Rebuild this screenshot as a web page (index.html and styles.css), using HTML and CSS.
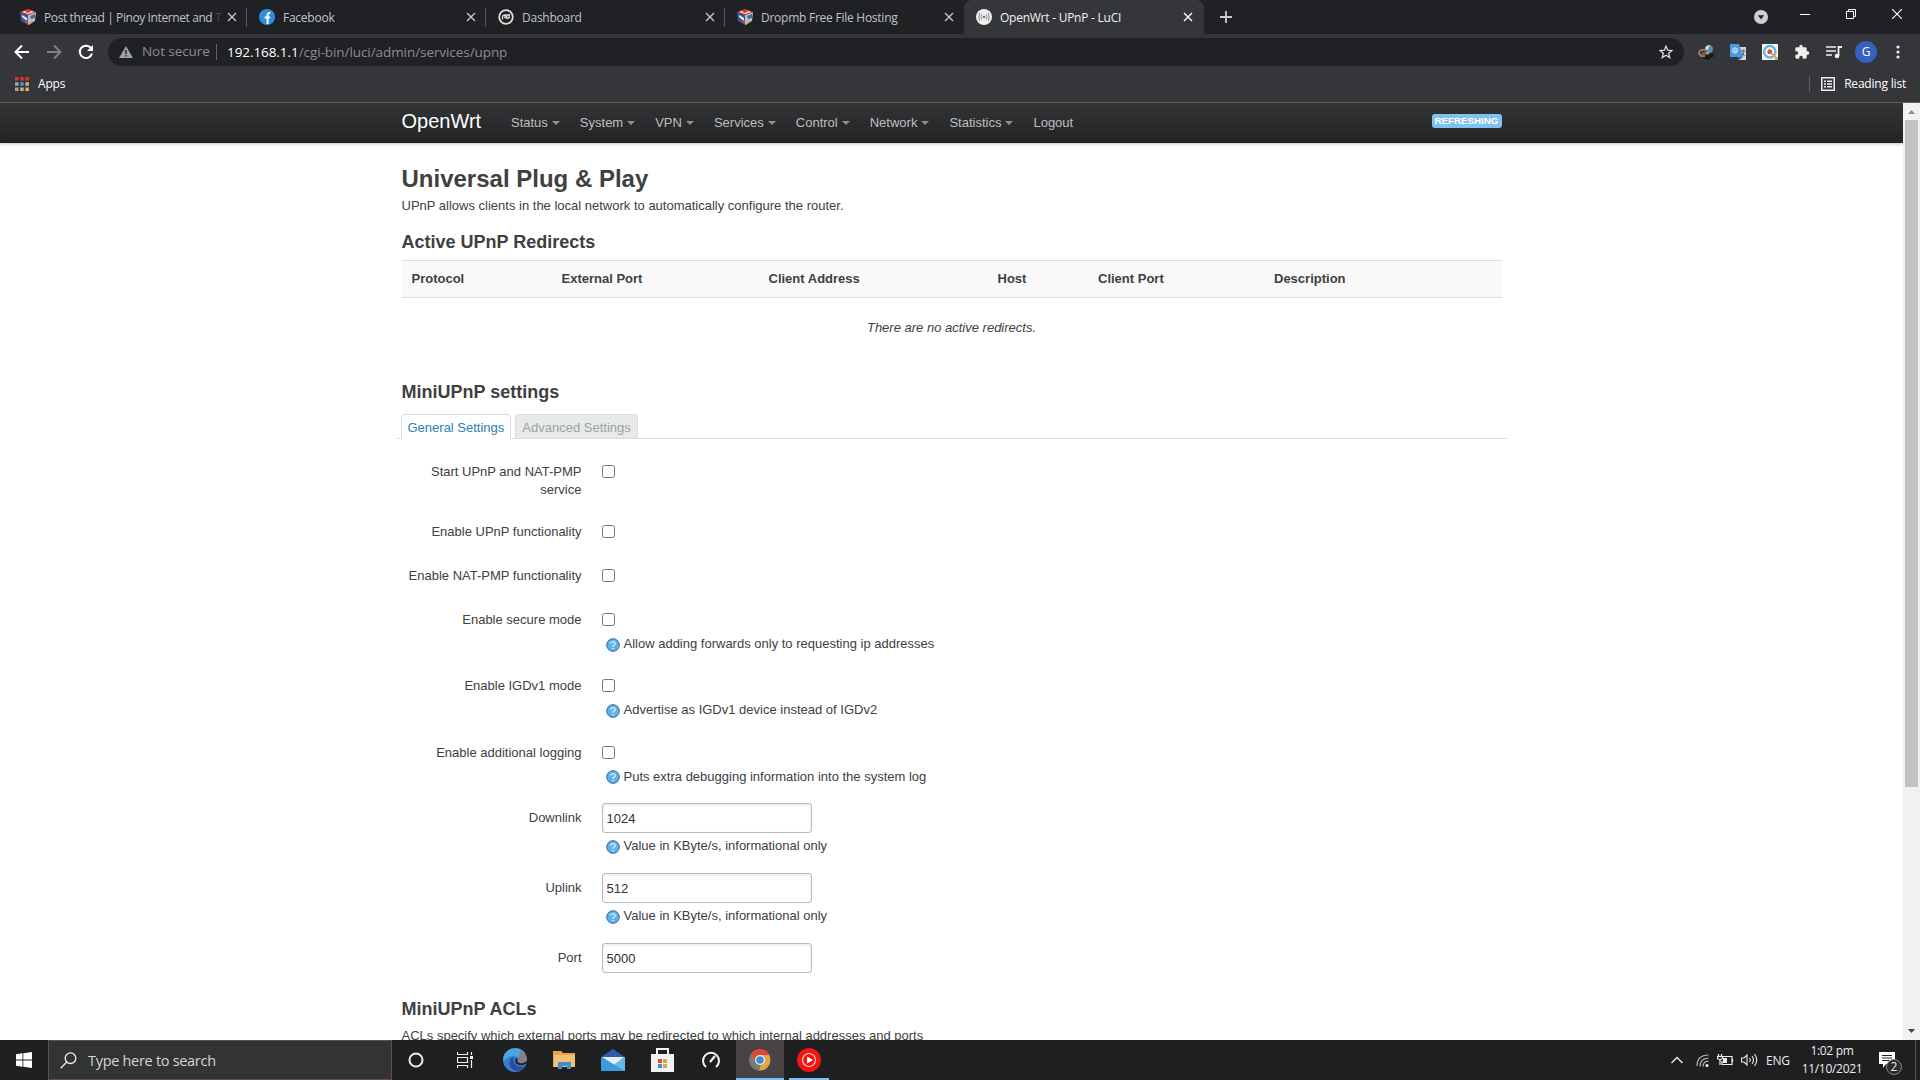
FILE: index.html
```html
<!DOCTYPE html>
<html lang="en">
<head>
    <meta charset="UTF-8">
    <meta name="viewport" content="width=device-width, initial-scale=1.0">
    <title>OpenWrt - UPnP - LuCI</title>
    <link rel="stylesheet" href="styles.css">
</head>
<body>
    <svg class="defs" width="0" height="0">
        <symbol id="i-close" viewBox="0 0 10 10"><path d="M1 1l8 8M9 1L1 9" stroke="currentColor" stroke-width="1.4" fill="none"/></symbol>
        <symbol id="i-cube" viewBox="0 0 16 16">
            <path d="M0 3l8 3v10l-7-4z" fill="#3b5595"/>
            <path d="M16 3L8 6v10l7-4z" fill="#b9c0c8"/>
            <path d="M0 3l8-3 8 3-8 3z" fill="#d8463a"/>
            <path d="M2 3l3-1 3 1 4-1 2 1-6 2z" fill="#e9e4e2"/>
            <path d="M5 3l3 1 3-2-3-1z" fill="#d8342d"/>
            <path d="M2 6l5 3v3L2 8z" fill="#e8edf2"/>
            <path d="M10 7l5-2v4l-4 1z" fill="#4968a8"/>
            <path d="M4 12l4 3v-4z" fill="#c0453d"/>
            <path d="M9 14l4-3v2l-4 3z" fill="#d9a562"/>
        </symbol>
        <symbol id="i-help" viewBox="0 0 14 14">
            <circle cx="7" cy="7" r="6.3" fill="#64b1e8" stroke="#2d6699"/>
            <path d="M4.8 5.4C5 3.2 9.2 3.2 9.2 5.5 9.2 7 7 7 7 8.7M7 10v1.4" stroke="#e9f6ff" stroke-width="1.2" fill="none"/>
        </symbol>
    </svg>

    <div class="tabstrip">
        <div class="tab">
            <svg class="favicon"><use href="#i-cube"/></svg>
            <span class="tab-title t-post">Post thread | Pinoy Internet and <i>T</i></span>
            <svg class="tab-close"><use href="#i-close"/></svg>
        </div>
        <div class="tab">
            <svg class="favicon" viewBox="0 0 16 16"><circle cx="8" cy="8" r="8" fill="#2f8ee0"/><path d="M8.6 15V8M5.7 8.6h5.4M8.6 9V6c0-1.6 1-2.2 2.7-1.9" stroke="#fff" stroke-width="2" fill="none"/></svg>
            <span class="tab-title">Facebook</span>
            <svg class="tab-close"><use href="#i-close"/></svg>
        </div>
        <div class="tab">
            <svg class="favicon" viewBox="0 0 16 16"><circle cx="8" cy="8" r="6.8" fill="#222" stroke="#ddd" stroke-width="1.8"/><path d="M4.5 10.500V8q0-2 3-2l-1 3M8 10l1-4h2.500l-.5 3H9" stroke="#ddd" stroke-width="1.3" fill="none"/></svg>
            <span class="tab-title">Dashboard</span>
            <svg class="tab-close"><use href="#i-close"/></svg>
        </div>
        <div class="tab">
            <svg class="favicon"><use href="#i-cube"/></svg>
            <span class="tab-title">Dropmb Free File Hosting</span>
            <svg class="tab-close"><use href="#i-close"/></svg>
        </div>
        <div class="tab active">
            <svg class="favicon" viewBox="0 0 16 16"><circle cx="8" cy="8" r="8" fill="#f1f1f1"/><circle cx="8" cy="8" r="1.3" fill="#777"/><path d="M5.8 5.3q-1.8 2.7 0 5.4M10.2 5.3q1.8 2.7 0 5.4M3.8 4q-2.4 4 0 8M12.2 4q2.4 4 0 8" stroke="#888" fill="none"/></svg>
            <span class="tab-title">OpenWrt - UPnP - LuCI</span>
            <svg class="tab-close"><use href="#i-close"/></svg>
        </div>
        <svg class="new-tab" viewBox="0 0 12 12"><path d="M6 0v12M0 6h12" stroke="#ccc" stroke-width="1.8"/></svg>
        <div class="window-buttons">
            <svg width="14" height="14" viewBox="0 0 14 14"><circle cx="7" cy="7" r="7" fill="#cfcfcf"/><path d="M3.8 5.2h6.4L7 9.4z" fill="#202124"/></svg>
            <svg class="win" width="10" height="10"><path d="M0 5.5h10" stroke="#fff"/></svg>
            <svg class="win" width="10" height="10"><path d="M.5 2.5h7v7h-7zM2.5 2.5v-2h7v7h-2" stroke="#fff" fill="none"/></svg>
            <svg class="win" width="10" height="10"><path d="M0 0l10 10M10 0L0 10" stroke="#fff" stroke-width="1.1"/></svg>
        </div>
    </div>

    <div class="toolbar">
        <svg width="16" height="16" viewBox="0 0 16 16"><path d="M15 8H2M8 1.5L1.5 8 8 14.5" stroke="#fff" stroke-width="2" fill="none"/></svg>
        <svg class="forward" width="16" height="16" viewBox="0 0 16 16"><path d="M1 8h13M8 1.5L14.5 8 8 14.5" stroke="#85817f" stroke-width="1.8" fill="none"/></svg>
        <svg class="reload" width="16" height="16" viewBox="0 0 16 16"><path d="M13.3 4.6A6.2 6.2 0 1 0 14 9.5" stroke="#fff" stroke-width="2" fill="none"/><path d="M15 1v6H9z" fill="#fff"/></svg>
        <div class="omnibox">
            <svg width="14" height="12" viewBox="0 0 14 12"><path d="M7 0l7 12H0z" fill="#9fa0a3"/><path d="M7 4v4M7 9v1.5" stroke="#202124" stroke-width="1.4"/></svg>
            <span class="not-secure">Not secure</span>
            <span class="url"><b>192.168.1.1</b>/cgi-bin/luci/admin/services/upnp</span>
            <svg class="star" width="14" height="14" viewBox="0 0 14 14"><path d="M7 1.2l1.7 4 4.3.3-3.3 2.8 1 4.3L7 10.3l-3.7 2.3 1-4.3L1 5.5l4.3-.3z" stroke="#ddd" stroke-width="1.3" fill="none"/></svg>
        </div>
        <div class="extensions">
            <svg width="16" height="16" viewBox="0 0 16 16"><path d="M3 13l12-4 1 3-6 4z" fill="#17181a"/><path d="M7 6Q1 5 1 9q1 4 6 3" stroke="#a87955" stroke-width="1.8" fill="none"/><path d="M4 9q3 2 5-1" stroke="#77706d" stroke-width="2" fill="none"/><circle cx="11" cy="5" r="4" fill="#4b8ec9"/><path d="M7 5q1-4 5-4l-2 5z" fill="#e5d6bd"/><path d="M7 9l5-2-2 4z" fill="#d98b45"/></svg>
            <svg width="16" height="16" viewBox="0 0 16 16"><path d="M6 3h10v13H9z" fill="#d3d6d8"/><path d="M0 0h9l4 13H0z" fill="#4a98e3"/><path d="M8 13h5l-4 3z" fill="#2462b4"/><circle cx="5" cy="6.5" r="2.7" fill="#8dc4f3" stroke="#c4e2fb"/><path d="M11 7h4M13 5.5V7M14 7.5q-1 3-2.500 4M12 9l2.500 3" stroke="#555" fill="none"/></svg>
            <svg width="16" height="16" viewBox="0 0 16 16"><path d="M0 0h16v16H0z" fill="#f5f5f5"/><circle cx="7.8" cy="7.8" r="5.7" fill="#fff" stroke="#66b4df" stroke-width="2.5"/><circle cx="7.8" cy="7.8" r="2.5" fill="#d64e37"/><path d="M9 9l5 5" stroke="#e4a44c" stroke-width="2"/><path d="M13 13h3v3h-3z" fill="#e4a44c"/></svg>
            <svg width="16" height="16" viewBox="0 0 24 24"><path fill="#eee" d="M20.5 11H19V7c0-1.100-.9-2-2-2h-4V3.500a2.500 2.500 0 0 0-5 0V5H4a2 2 0 0 0-2 2v3.800h1.500a2.700 2.700 0 0 1 0 5.400H2V20c0 1.100.9 2 2 2h3.800v-1.500a2.700 2.700 0 0 1 5.400 0V22H17a2 2 0 0 0 2-2v-4h1.500a2.500 2.500 0 0 0 0-5z"/></svg>
            <svg width="16" height="16" viewBox="0 0 16 16"><path d="M0 3h10M0 7h10M0 11h6" stroke="#eee" stroke-width="1.7"/><path d="M12.5 12V3H16" stroke="#eee" stroke-width="1.8" fill="none"/><circle cx="11" cy="12" r="2.3" fill="#eee"/></svg>
            <span class="avatar">G</span>
            <svg width="4" height="14" viewBox="0 0 4 14"><circle cx="2" cy="2" r="1.6" fill="#eee"/><circle cx="2" cy="7" r="1.6" fill="#eee"/><circle cx="2" cy="12" r="1.6" fill="#eee"/></svg>
        </div>
    </div>

    <div class="bookmarks">
        <svg width="14" height="14" viewBox="0 0 14 14">
            <path d="M0 0h3.5v3.5H0zM5.2 0h3.5v3.5H5.2zM10.4 0h3.5v3.5h-3.5z" fill="#d8342d"/>
            <path d="M0 5.2h3.5v3.5H0zM0 10.4h3.5v3.5H0z" fill="#a9a49c"/>
            <path d="M5.2 5.2h3.5v3.5H5.2z" fill="#4496dc"/>
            <path d="M10.4 5.2h3.5v3.5h-3.5zM5.2 10.4h3.5v3.5H5.2zM10.4 10.4h3.5v3.5h-3.5z" fill="#dfad68"/>
        </svg>
        <span class="apps">Apps</span>
        <div class="reading-list">
            <svg width="14" height="14" viewBox="0 0 14 14"><path d="M.8.8h12.4v12.4H.8z" stroke="#eee" stroke-width="1.5" fill="none"/><path d="M3 4.2h2M6 4.2h5M3 7h2M6 7h5M3 9.8h2M6 9.8h5" stroke="#eee" stroke-width="1.5"/></svg>
            <span>Reading list</span>
        </div>
    </div>

    <div class="viewport">
        <div class="page">
            <header>
                <div class="container">
                    <a class="brand" href="#">OpenWrt</a>
                    <ul class="nav">
                        <li><a class="menu" href="#">Status</a></li>
                        <li><a class="menu" href="#">System</a></li>
                        <li><a class="menu" href="#">VPN</a></li>
                        <li><a class="menu" href="#">Services</a></li>
                        <li><a class="menu" href="#">Control</a></li>
                        <li><a class="menu" href="#">Network</a></li>
                        <li><a class="menu" href="#">Statistics</a></li>
                        <li><a href="#">Logout</a></li>
                    </ul>
                    <span class="indicator">Refreshing</span>
                </div>
            </header>

            <main class="container">
                <h2>Universal Plug &amp; Play</h2>
                <p class="descr">UPnP allows clients in the local network to automatically configure the router.</p>

                <h3>Active UPnP Redirects</h3>
                <div class="table-head">
                    <span>Protocol</span>
                    <span>External Port</span>
                    <span>Client Address</span>
                    <span>Host</span>
                    <span>Client Port</span>
                    <span>Description</span>
                </div>
                <p class="placeholder">There are no active redirects.</p>

                <h3>MiniUPnP settings</h3>
                <ul class="cbi-tabs">
                    <li class="current"><a href="#">General Settings</a></li>
                    <li><a href="#">Advanced Settings</a></li>
                </ul>

                <div class="row two-line">
                    <label>Start UPnP and NAT-PMP service</label>
                    <div class="field"><input type="checkbox"></div>
                </div>
                <div class="row">
                    <label>Enable UPnP functionality</label>
                    <div class="field"><input type="checkbox"></div>
                </div>
                <div class="row">
                    <label>Enable NAT-PMP functionality</label>
                    <div class="field"><input type="checkbox"></div>
                </div>
                <div class="row with-hint">
                    <label>Enable secure mode</label>
                    <div class="field">
                        <input type="checkbox">
                        <div class="hint"><svg><use href="#i-help"/></svg>Allow adding forwards only to requesting ip addresses</div>
                    </div>
                </div>
                <div class="row with-hint">
                    <label>Enable IGDv1 mode</label>
                    <div class="field">
                        <input type="checkbox">
                        <div class="hint"><svg><use href="#i-help"/></svg>Advertise as IGDv1 device instead of IGDv2</div>
                    </div>
                </div>
                <div class="row with-hint">
                    <label>Enable additional logging</label>
                    <div class="field">
                        <input type="checkbox">
                        <div class="hint"><svg><use href="#i-help"/></svg>Puts extra debugging information into the system log</div>
                    </div>
                </div>
                <div class="row with-text">
                    <label>Downlink</label>
                    <div class="field">
                        <input type="text" value="1024">
                        <div class="hint"><svg><use href="#i-help"/></svg>Value in KByte/s, informational only</div>
                    </div>
                </div>
                <div class="row with-text">
                    <label>Uplink</label>
                    <div class="field">
                        <input type="text" value="512">
                        <div class="hint"><svg><use href="#i-help"/></svg>Value in KByte/s, informational only</div>
                    </div>
                </div>
                <div class="row with-text last">
                    <label>Port</label>
                    <div class="field"><input type="text" value="5000"></div>
                </div>

                <h3>MiniUPnP ACLs</h3>
                <p class="descr acl">ACLs specify which external ports may be redirected to which internal addresses and ports</p>
            </main>
        </div>
        <div class="scrollbar">
            <svg width="7" height="4"><path d="M0 4L3.5 0 7 4z" fill="#8c9090"/></svg>
            <div class="thumb"></div>
            <svg width="7" height="4"><path d="M0 0h7L3.5 4z" fill="#444"/></svg>
        </div>
    </div>

    <div class="taskbar">
        <div class="start"><svg width="16" height="16" viewBox="0 0 16 16"><path d="M0 2.2L6.5 1.3v6.2H0zM7.3 1.2L16 0v7.500H7.300zM0 8.400h6.500v6.300L0 13.800zM7.300 8.400H16V16l-8.700-1.200z" fill="#fff"/></svg></div>
        <div class="search">
            <svg width="17" height="17" viewBox="0 0 17 17"><circle cx="10.5" cy="6.2" r="5.3" stroke="#eee" stroke-width="1.3" fill="none"/><path d="M6.8 10L.7 16.2" stroke="#eee" stroke-width="1.3"/></svg>
            <span>Type here to search</span>
        </div>
        <div class="task"><svg width="16" height="16"><circle cx="8" cy="8" r="6.5" stroke="#eee" stroke-width="2" fill="none"/></svg></div>
        <div class="task view"><svg width="16" height="16"><path d="M.5 0v2.500h10V0M.5 5.500h10v5H.5zM.5 16v-2.500h10V16M14.500 0v3M14.500 8v8" stroke="#eee" stroke-width="1.2" fill="none"/><path d="M13 4h3v3h-3z" fill="#fff"/></svg></div>
        <div class="task"><svg width="24" height="24" viewBox="0 0 24 24"><circle cx="12" cy="12" r="12" fill="#3480cf"/><path d="M.5 9C3-1 18-3 22.500 6L14 9q-4-2-8 0-3 1-5.500 4z" fill="#4aa6df"/><path d="M17 1.500q7 4 7 10.500-1 4-5 4-4 0-5-2 3-3 1-6 3-2 2-6.500z" fill="#8b7f85"/><path d="M8 10q-4 6 1 11 7 5 13-3-5 2-9-1-4-3-2-8z" fill="#314c9e"/><path d="M13 10q-3 5 3 7 4 1 8-2 0-2-.5-2-3 3-7 2-3-1-2-4z" fill="#202124"/></svg></div>
        <div class="task"><svg width="22" height="20" viewBox="0 0 22 20"><path d="M0 1h8l2 2h12v14H0z" fill="#e5a44b"/><path d="M1 5h21v12H1z" fill="#f1c276"/><path d="M5 19v-7h13v7h-4v-3H9v3z" fill="#3d91cc"/></svg></div>
        <div class="task"><svg width="24" height="22" viewBox="0 0 24 22"><path d="M0 8l12-8 12 8v14H0z" fill="#2d5da8"/><path d="M1 8h22l-9 9z" fill="#e7eff5"/><path d="M0 8l14 8 10-8v14H0z" fill="#3d9ade"/><path d="M24 8v14L13 15.500z" fill="#69b6ea"/></svg></div>
        <div class="task"><svg width="23" height="24" viewBox="0 0 23 24"><path d="M6 7V1h11v6" stroke="#f2f2f2" stroke-width="2" fill="none"/><path d="M0 6h23v18H0z" fill="#f2f2f2"/><path d="M7 11h4v4H7z" fill="#d95032"/><path d="M12 11h4v4h-4z" fill="#d9a34d"/><path d="M7 16h4v4H7z" fill="#3a91d6"/><path d="M12 16h4v4h-4z" fill="#e2a34e"/></svg></div>
        <div class="task"><svg width="20" height="20" viewBox="0 0 20 20"><path d="M5 17A8 8 0 1 1 15 17" stroke="#f4f4f4" stroke-width="2" fill="none"/><path d="M9 12l5-6" stroke="#f4f4f4" stroke-width="2.2"/></svg></div>
        <div class="task open focused"><svg width="22" height="22" viewBox="0 0 22 22"><circle cx="11" cy="11" r="10.5" fill="#e0a644"/><path d="M2 5a10.500 10.500 0 0 1 18.500 1H11l-4 7z" fill="#d7493a"/><path d="M2 5l5 8 5 3-2 5.500A10.500 10.500 0 0 1 2 5z" fill="#7d7772"/><circle cx="11" cy="11" r="5" fill="#f2f2f2"/><circle cx="11" cy="11" r="3.8" fill="#3d89d4"/></svg></div>
        <div class="task open music"><svg width="24" height="24" viewBox="0 0 24 24"><circle cx="12" cy="12" r="12" fill="#f51414"/><circle cx="12" cy="12" r="6.5" stroke="#ffd6ce" stroke-width="1.2" fill="none"/><path d="M10 8.500l6 3.500-6 3.500z" fill="#fff"/></svg></div>

        <div class="tray">
            <svg class="chevron" width="12" height="8"><path d="M.5 7L6 1.5 11.5 7" stroke="#eee" stroke-width="1.3" fill="none"/></svg>
            <svg class="wifi" width="13" height="13" viewBox="0 0 13 13"><path d="M1 12Q1 1 12.500 1M4 12.500q0-8 8.500-8.500M7 12.500q0-5 5.500-5.500" stroke="#bbb" stroke-width="1.2" fill="none"/><circle cx="11" cy="11.5" r="1.5" fill="#fff"/></svg>
            <svg class="battery" width="17" height="12" viewBox="0 0 17 12"><path d="M6 2.500h9v8H5V7M15.500 5v3M1.500 0v2.500M4.500 0v2.500M.5 2.500h5v2q-2.500 2-5 0zM3 5v6" stroke="#eee" stroke-width="1.2" fill="none"/><path d="M6 4h4v5H6z" fill="#eee"/></svg>
            <svg class="speaker" width="17" height="14" viewBox="0 0 17 14"><path d="M.5 5v4H3l3 3V2L3 5zM8.500 5q1.500 2 0 4M11 3q3 4 0 8M13.500 1q4.500 6 0 12" stroke="#eee" stroke-width="1.1" fill="none"/></svg>
            <span class="lang">ENG</span>
            <div class="clock"><span>1:02 pm</span><span>11/10/2021</span></div>
            <div class="notify">
                <svg width="16" height="16" viewBox="0 0 16 16"><path d="M0 0h16v12H7l-3 4v-4H0z" fill="#fff"/><path d="M3 3.500h10M3 6h10M3 8.500h7" stroke="#202124"/></svg>
                <span class="count">2</span>
            </div>
        </div>
    </div>
</body>
</html>
```
FILE: styles.css
```css
* {
    box-sizing: border-box;
}

body {
    margin: 0;
    width: 1920px;
    height: 1080px;
    overflow: hidden;
    display: flex;
    flex-direction: column;
    font-family: "Open Sans", "Noto Sans", sans-serif;
    font-size: 12px;
    color: #fff;
    background: #fff;
}

svg {
    display: block;
    flex: none;
}

.defs {
    position: absolute;
}

/* Browser tabs */
.tabstrip {
    height: 34px;
    flex: none;
    display: flex;
    align-items: center;
    padding-left: 8px;
    background: #202124;
}

.tab {
    width: 239px;
    height: 34px;
    display: flex;
    align-items: center;
    padding: 0 10px 0 12px;
    color: #bfc3ca;
    background: linear-gradient(#5a5557, #5a5557) right center / 1px 19px no-repeat;
}

.tab:nth-child(4) {
    background: none;
}

.tab.active {
    width: 240px;
    background: #35363a;
    color: #f1f1f1;
    border-radius: 8px 8px 0 0;
    padding-right: 11px;
}

.favicon {
    width: 16px;
    height: 16px;
    margin-right: 8px;
}

.tab-title {
    flex: 1;
    white-space: nowrap;
    overflow: hidden;
    letter-spacing: -0.25px;
}

.tab-title i {
    font-style: normal;
    color: #444549;
}

.t-post {
    letter-spacing: -0.4px;
}

.tab-close {
    width: 10px;
    height: 10px;
    color: #c6c6c6;
}

.active .tab-close {
    color: #fff;
}

.new-tab {
    width: 12px;
    height: 12px;
    margin-left: 16px;
}

.window-buttons {
    margin-left: auto;
    height: 34px;
    display: flex;
    padding: 10px 18px 0 0;
}

.window-buttons .win {
    margin: -1px 0 0 36px;
}

.window-buttons .win:nth-child(2) {
    margin-left: 32px;
}

/* Address bar */
.toolbar {
    height: 36px;
    flex: none;
    display: flex;
    align-items: center;
    padding: 0 17px 0 14px;
    background: #35363a;
}

.forward {
    margin-left: 16px;
}

.reload {
    margin: 0 14px 0 16px;
}

.omnibox {
    width: 1576px;
    height: 28px;
    display: flex;
    align-items: center;
    padding: 0 11px;
    border-radius: 14px;
    background: #202124;
    font-size: 13.5px;
    letter-spacing: -0.07px;
    color: #8f8b8f;
}

.not-secure {
    margin-left: 9px;
    width: 75px;
    height: 16px;
    line-height: 15px;
    border-right: 1px solid #66605f;
    white-space: nowrap;
}

.url {
    margin-left: 10px;
}

.url b {
    font-weight: normal;
    color: #fff;
}

.star {
    margin-left: auto;
}

.extensions {
    display: flex;
    align-items: center;
    gap: 16px;
    margin-left: 14px;
}

.avatar {
    width: 22px;
    height: 22px;
    margin: 0 3px 0 -3px;
    border-radius: 50%;
    background: #3361bd;
    text-align: center;
    line-height: 22px;
}

.bookmarks {
    height: 33px;
    flex: none;
    display: flex;
    align-items: center;
    padding: 0 14px 5px 15px;
    background: #35363a;
    border-bottom: 1px solid #6a5a59;
}

.apps {
    margin-left: 9px;
    letter-spacing: -0.2px;
}

.reading-list {
    display: flex;
    align-items: center;
    gap: 9px;
    margin-left: auto;
    padding-left: 11px;
    height: 16px;
    border-left: 1px solid #6a5a59;
    letter-spacing: -0.2px;
}

/* Page */
.viewport {
    flex: 1;
    min-height: 0;
    display: flex;
    overflow: hidden;
}

.page {
    width: 1903px;
    overflow: hidden;
    font-family: "Liberation Sans", Arial, sans-serif;
    font-size: 13px;
    line-height: 18px;
    color: #404040;
}

.container {
    width: 1100px;
    margin: 0 auto;
}

header {
    height: 40px;
    background: linear-gradient(#333436, #222325);
    box-shadow: 0 1px 3px rgba(0, 0, 0, 0.25);
}

header .container {
    display: flex;
    height: 40px;
}

.brand {
    width: 99.5px;
    font-size: 20px;
    line-height: 36px;
    color: #fff;
    text-decoration: none;
}

.nav {
    display: flex;
    list-style: none;
    margin: 0;
    padding: 0;
}

.nav a {
    display: block;
    padding: 11px 10px;
    color: #bfbfbf;
    text-decoration: none;
}

.nav .menu::after {
    content: "";
    display: inline-block;
    margin-left: 4px;
    vertical-align: 2px;
    border: 4px solid transparent;
    border-top-color: #8f8f8f;
    border-bottom: 0;
}

.indicator {
    margin: 11px 0 0 auto;
    width: 70px;
    height: 14px;
    border-radius: 3px;
    background: #7fc2f0;
    color: #fff;
    font-size: 9.75px;
    font-weight: bold;
    line-height: 14px;
    text-align: center;
    text-transform: uppercase;
}

h2,
h3 {
    margin: 0;
    line-height: 36px;
}

h2 {
    padding-top: 18px;
    font-size: 24px;
}

h3 {
    font-size: 18px;
}

.descr {
    margin: 0 0 9px;
}

.table-head {
    display: grid;
    grid-template-columns: 150px 207px 229px 100.5px 176px 1fr;
    height: 38px;
    padding: 0 10px;
    line-height: 36px;
    font-weight: bold;
    background: #f9f9f9;
    border-top: 1px solid #ddd;
    border-bottom: 1px solid #ddd;
}

.placeholder {
    margin: 21px 0 37px;
    text-align: center;
    font-style: italic;
}

.cbi-tabs {
    display: flex;
    gap: 4px;
    list-style: none;
    margin: 4px -5px 23px;
    padding: 0 4px;
    height: 25px;
    border-bottom: 1px solid #ddd;
}

.cbi-tabs li {
    height: 24px;
    padding: 0 6px;
    line-height: 25px;
    border: 1px solid #ddd;
    border-bottom: 0;
    border-radius: 4px 4px 0 0;
    background: #e8eaea;
}

.cbi-tabs a {
    color: #9aa2a5;
    text-decoration: none;
}

.cbi-tabs .current {
    height: 25px;
    background: #fff;
}

.cbi-tabs .current a {
    color: #2f80b4;
}

/* Option rows */
.row {
    display: flex;
    gap: 20px;
    height: 44px;
}

.row.two-line {
    height: 60px;
}

.row.with-hint {
    height: 66.3px;
}

.row.with-text {
    height: 70px;
}

.row.with-text.last {
    height: 42px;
}

.row label {
    width: 180px;
    padding-top: 1px;
    text-align: right;
}

.row.with-text label {
    padding-top: 0;
}

.row.two-line label {
    padding-left: 20px;
}

.field input[type="checkbox"] {
    display: block;
    width: 13px;
    height: 13px;
    margin: 3px 0 9px 0.5px;
}

.field input[type="text"] {
    display: block;
    width: 210px;
    height: 30px;
    margin: -5.5px 0 4px 0.5px;
    padding: 4px 3.5px;
    border: 1px solid #bbb;
    border-radius: 3px;
    box-shadow: inset 0 1px 3px rgba(0, 0, 0, 0.1);
    font: 13px "Liberation Sans", Arial, sans-serif;
    color: #303030;
}

.hint {
    display: flex;
    align-items: center;
    gap: 4px;
    padding-left: 4px;
}

.hint svg {
    width: 14px;
    height: 14px;
    margin-top: 1px;
}

.acl {
    white-space: nowrap;
}

.scrollbar {
    width: 17px;
    display: flex;
    flex-direction: column;
    align-items: center;
    padding: 7px 0;
    background: #f0f2f1;
}

.scrollbar svg:last-child {
    margin-top: auto;
}

.thumb {
    width: 13px;
    height: 667px;
    margin-top: 6px;
    background: #c1c3c2;
}

/* Taskbar */
.taskbar {
    height: 40px;
    flex: none;
    display: flex;
    align-items: center;
    background: #1e1f21;
}

.start {
    width: 48px;
    padding-left: 16px;
}

.search {
    width: 344px;
    height: 40px;
    display: flex;
    align-items: center;
    gap: 11px;
    padding-left: 11px;
    border: 1px solid #66504f;
    background: #313335;
    color: #d5d5d5;
    font-size: 14.5px;
    letter-spacing: -0.3px;
}

.task {
    width: 48px;
    height: 40px;
    display: flex;
    align-items: center;
    justify-content: center;
    margin-right: 1px;
}

.task.view {
    width: 47px;
    margin-right: 3px;
}

.task.open {
    padding-top: 2px;
    border-bottom: 2px solid #84bced;
}

.task.focused {
    background: #484446;
}

.task.music {
    width: 40px;
    margin-left: 4px;
}

.tray {
    display: flex;
    align-items: center;
    margin-left: auto;
    height: 40px;
    width: 249px;
    color: #eee;
}

.wifi {
    margin-left: 13px;
}

.battery {
    margin-left: 8px;
}

.speaker {
    margin-left: 7px;
}

.lang {
    width: 24px;
    margin-left: 8px;
    letter-spacing: -0.2px;
}

.clock {
    width: 70px;
    margin-left: 7px;
    display: flex;
    flex-direction: column;
    align-items: center;
    line-height: 18px;
    letter-spacing: -0.3px;
}

.notify {
    position: relative;
    margin-left: 12px;
    padding-right: 20px;
    height: 40px;
    padding-top: 12px;
    border-right: 1px solid #5d5050;
}

.count {
    position: absolute;
    left: 7px;
    top: 19px;
    width: 16px;
    height: 16px;
    border: 1px solid #888;
    border-radius: 50%;
    background: #2b2b2d;
    font-size: 12px;
    line-height: 14px;
    text-align: center;
}
```
